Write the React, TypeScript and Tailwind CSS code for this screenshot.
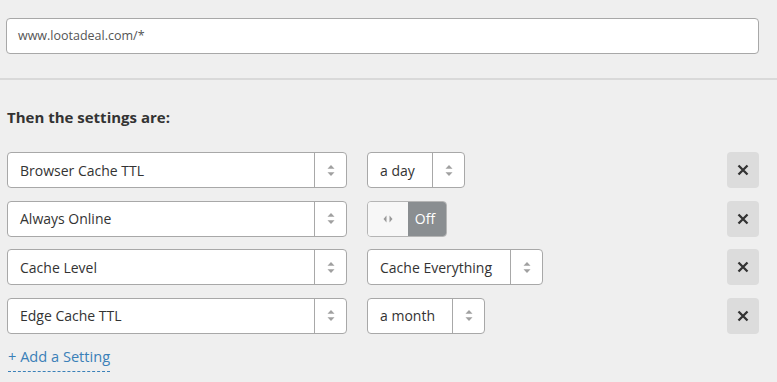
import React from 'react'

function Arrows() {
	return (
		<svg width="8" height="13" viewBox="0 0 8 13" className="text-[#a0a0a0]">
			<path d="M4 1 L7.5 4.8 H0.5 Z" fill="currentColor" />
			<path d="M4 12 L7.5 8.2 H0.5 Z" fill="currentColor" />
		</svg>
	)
}

function Select({ label, width }: { label: string; width: string }) {
	return (
		<div
			className={`${width} h-9 flex items-stretch bg-white border border-[#a8a8a8] rounded-[4px] text-[14px] text-[#333]`}
		>
			<div className="flex-1 flex items-center pl-3">{label}</div>
			<div className="w-8 flex items-center justify-center border-l border-[#a8a8a8]">
				<Arrows />
			</div>
		</div>
	)
}

function Toggle() {
	return (
		<div className="w-20 h-9 flex rounded-[4px] overflow-hidden border border-[#b5b5b5] text-[14px]">
			<div className="w-10 bg-[#f7f7f7] flex items-center justify-center">
				<svg width="10" height="8" viewBox="0 0 10 8" className="text-[#9a9a9a]">
					<path d="M3.5 0.5 L0.5 4 L3.5 7.5 Z" fill="currentColor" />
					<path d="M6.5 0.5 L9.5 4 L6.5 7.5 Z" fill="currentColor" />
				</svg>
			</div>
			<div className="flex-1 bg-[#8a8e91] text-white flex items-center justify-center pr-1">
				Off
			</div>
		</div>
	)
}

function RemoveButton() {
	return (
		<button className="ml-auto w-8 h-9 rounded-[4px] bg-[#dcdcdc] flex items-center justify-center">
			<svg width="12" height="12" viewBox="0 0 12 12">
				<path d="M1.5 1.5 L10.5 10.5 M10.5 1.5 L1.5 10.5" stroke="#333" strokeWidth="2.3" />
			</svg>
		</button>
	)
}

const rows = [
	{ name: 'Browser Cache TTL', value: <Select label="a day" width="w-[98px]" /> },
	{ name: 'Always Online', value: <Toggle /> },
	{ name: 'Cache Level', value: <Select label="Cache Everything" width="w-[176px]" /> },
	{ name: 'Edge Cache TTL', value: <Select label="a month" width="w-[118px]" /> },
]

export default function App() {
	return (
		<div
			className="w-[777px] h-[382px] bg-[#efefef] overflow-hidden"
			style={{ fontFamily: '"Open Sans", "Noto Sans", sans-serif' }}
		>
			<div className="pt-[18px] pl-[6px] pr-[18px]">
				<div className="h-9 bg-white border border-[#a8a8a8] rounded-[4px] flex items-center pl-[11px] text-[12.5px] text-[#555]">
					www.lootadeal.com/*
				</div>
			</div>
			<div className="mt-[24px] h-[2px] bg-[#d9d9d9]" />
			<div className="pl-[7px] pr-[18px]">
				<h3 className="mt-[27px] text-[15px] font-bold text-[#333] leading-5">
					Then the settings are:
				</h3>
				<div className="mt-[25px] flex flex-col gap-[12.5px]">
					{rows.map((row) => (
						<div key={row.name} className="flex items-center gap-5">
							<Select label={row.name} width="w-[340px]" />
							{row.value}
							<RemoveButton />
						</div>
					))}
				</div>
				<div className="mt-[10px] pl-[1px]">
					<a className="inline-block text-[14.6px] text-[#3a80b8] border-b border-dashed border-[#3a80b8] leading-5 pb-[5px]">
						+ Add a Setting
					</a>
				</div>
			</div>
		</div>
	)
}
